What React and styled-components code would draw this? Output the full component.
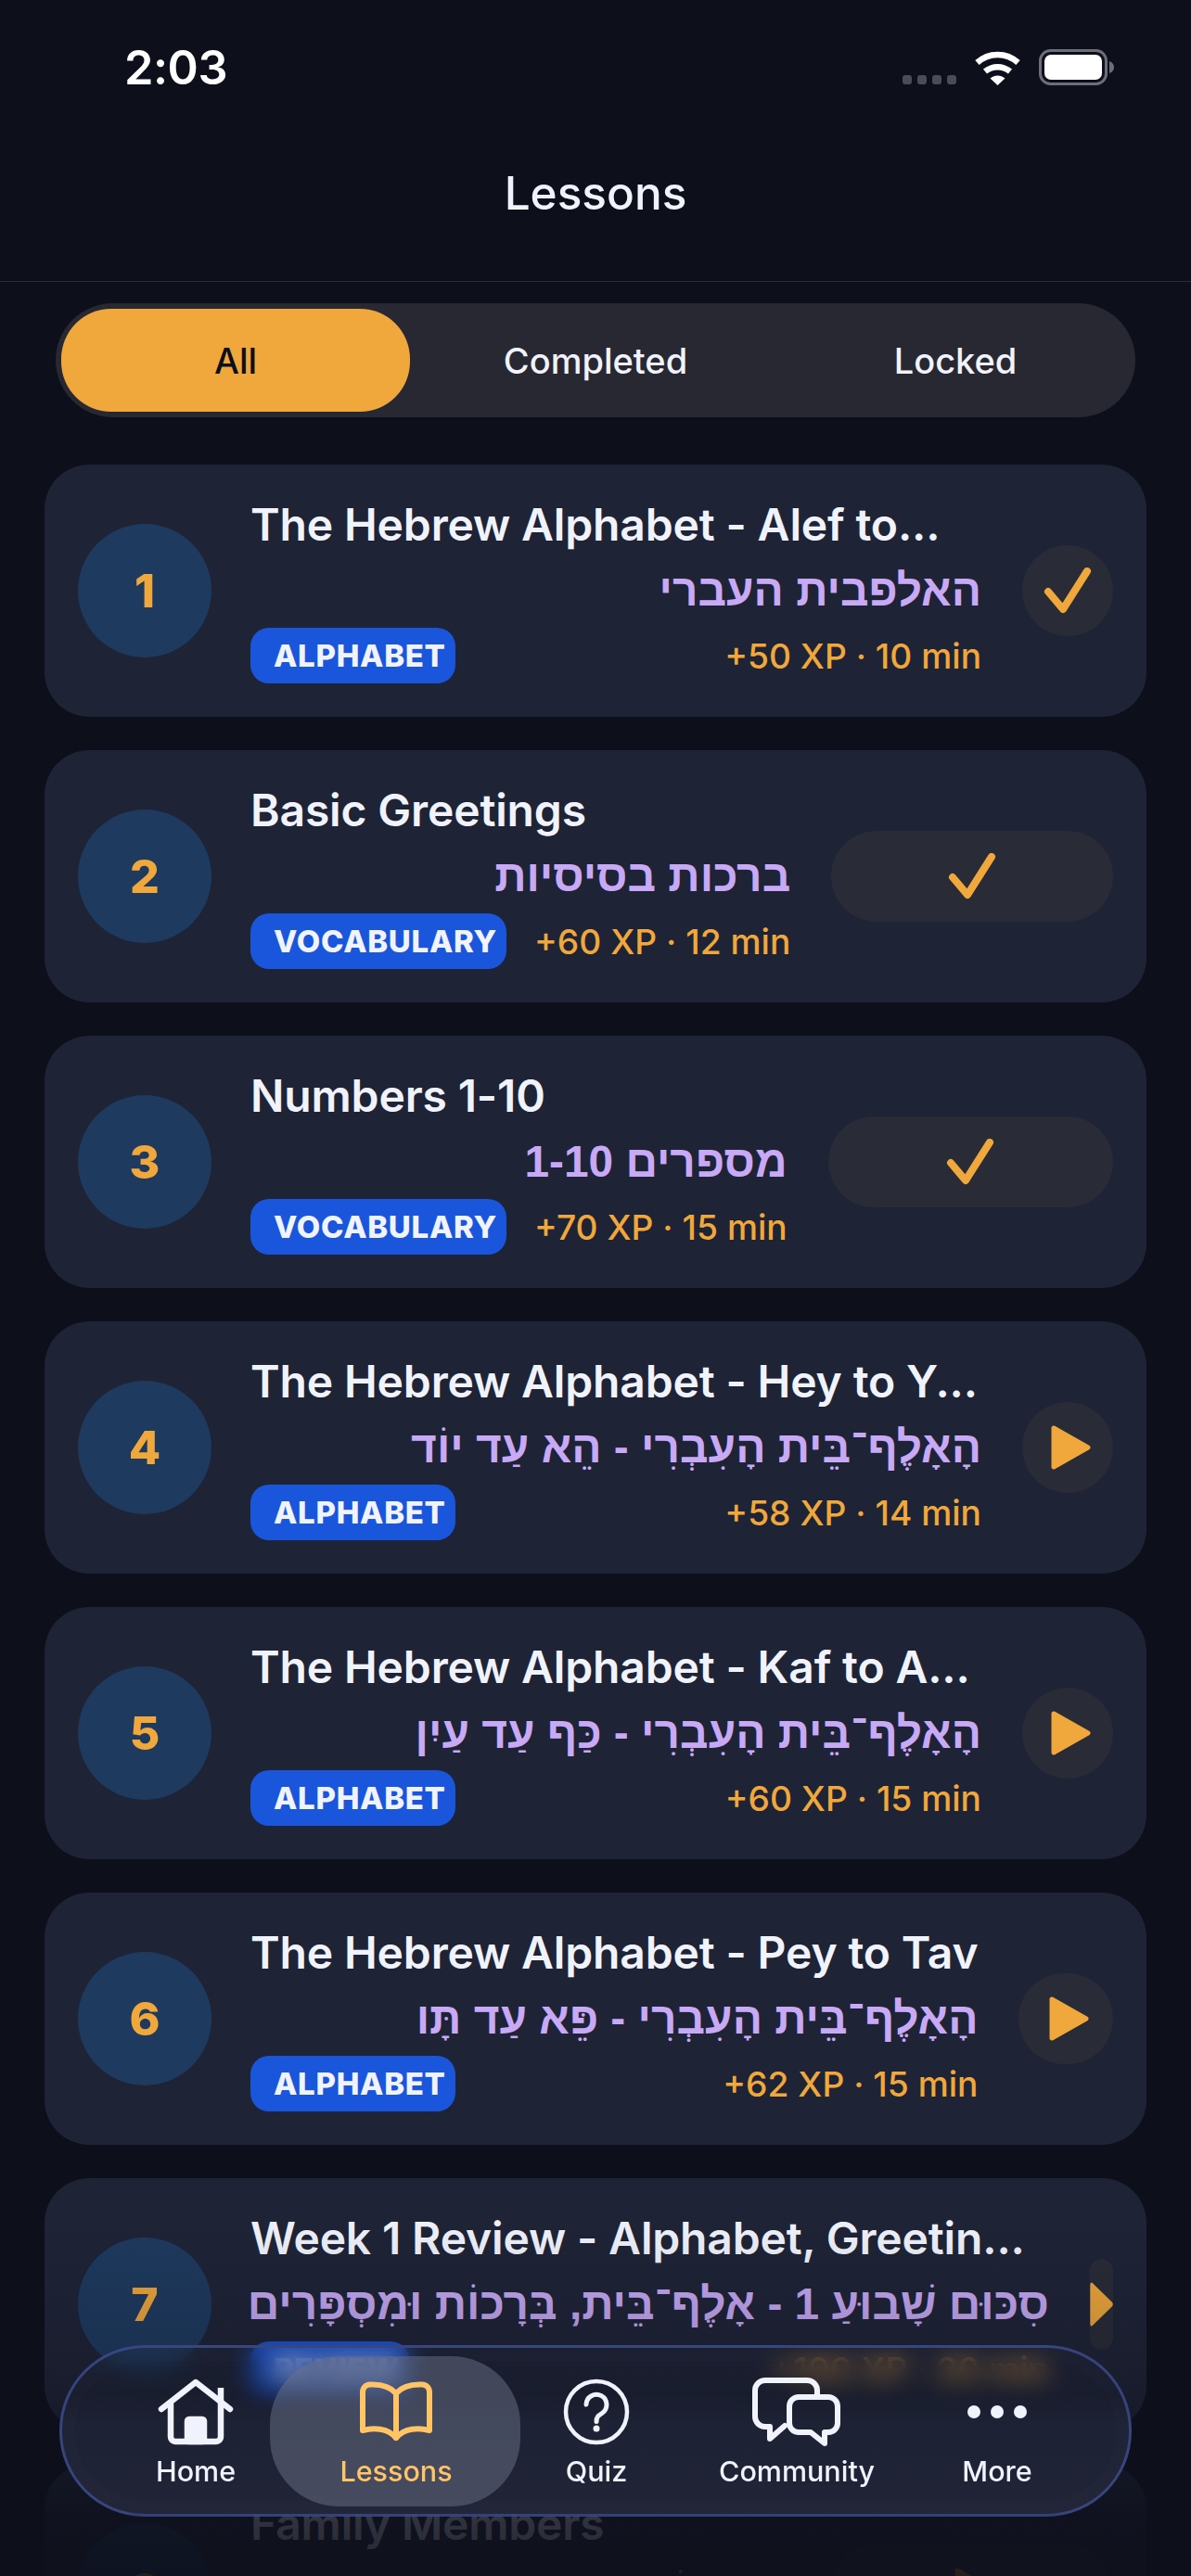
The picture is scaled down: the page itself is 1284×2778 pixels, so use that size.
import React from "react";
import styled, { createGlobalStyle } from "styled-components";

const Global = createGlobalStyle`
  html, body { margin: 0; padding: 0; background: #0d0f1a; }
  * { box-sizing: border-box; }
  body { font-family: Inter, "Liberation Sans", sans-serif; }
`;

const Screen = styled.div`
  position: relative;
  width: 1284px;
  height: 2778px;
  overflow: hidden;
  background: #0d0f1a;
  color: #f1f3fc;
`;

const StatusBar = styled.div`
  height: 144px;
  padding: 0 82px 0 134px;
  display: flex;
  align-items: center;
  justify-content: space-between;
`;
const Clock = styled.div`
  font-size: 50.5px;
  font-weight: 600;
  color: #fff;
  letter-spacing: -0.5px;
`;
const StatusIcons = styled.div`
  display: flex;
  align-items: flex-end;
  gap: 19px;
  height: 39px;
`;
const SignalDots = styled.div`
  display: flex;
  gap: 6px;
  margin-bottom: 1px;
`;
const SignalDot = styled.span`
  width: 10px;
  height: 10px;
  border-radius: 3px;
  background: #4a4c58;
`;

const TitleBar = styled.header`
  height: 160px;
  padding-bottom: 31px;
  display: flex;
  align-items: center;
  justify-content: center;
  border-bottom: 1px solid #2a2c39;
  font-size: 49.5px;
  font-weight: 500;
`;

const Tabs = styled.div`
  margin: 23px 60px 0;
  height: 123px;
  padding: 6px;
  border-radius: 62px;
  background: #282833;
  display: grid;
  grid-template-columns: repeat(3, 1fr);
  gap: 12px;
`;
const Tab = styled.div`
  border-radius: 54px;
  display: flex;
  align-items: center;
  justify-content: center;
  font-size: 38px;
  font-weight: 500;
  background: ${(p) => (p.$active ? "#f0a83c" : "transparent")};
  color: ${(p) => (p.$active ? "#0d0f1a" : "#f1f3fc")};
`;

const List = styled.div`
  margin-top: 51px;
  padding: 0 48px;
  display: flex;
  flex-direction: column;
  gap: 36px;
`;
const Card = styled.div`
  flex: none;
  height: 272px;
  padding: 0 36px;
  border-radius: 48px;
  background: #1e2336;
  display: flex;
  align-items: center;
  gap: 42px;
`;
const NumberBadge = styled.div`
  flex: none;
  width: 144px;
  height: 144px;
  border-radius: 50%;
  background: #1e3a5f;
  color: #f0a83c;
  font-size: 50px;
  font-weight: 800;
  display: flex;
  align-items: center;
  justify-content: center;
`;
const Body = styled.div`
  flex: ${(p) => (p.$full ? "0 0 788px" : "0 1 auto")};
  min-width: 0;
  display: flex;
  flex-direction: column;
`;
const LessonTitle = styled.div`
  font-size: 48px;
  line-height: 58px;
  font-weight: 600;
  letter-spacing: -0.15px;
  color: #f1f3fc;
  white-space: nowrap;
`;
const Hebrew = styled.div`
  margin-top: 13px;
  font-family: "Liberation Sans", Arial, sans-serif;
  font-size: 47.8px;
  line-height: 58px;
  font-weight: 700;
  color: #c7a9f5;
  white-space: nowrap;
  direction: rtl;
  text-align: right;
`;
const Meta = styled.div`
  margin-top: 11px;
  display: flex;
  align-items: center;
  justify-content: space-between;
  gap: 30px;
`;
const Tag = styled.div`
  height: 60px;
  padding: 0 10px 0 25px;
  border-radius: 20px;
  background: #1a56db;
  color: #f1f3fc;
  font-size: 33px;
  font-weight: 800;
  letter-spacing: 0.7px;
  display: flex;
  align-items: center;
  white-space: nowrap;
`;
const Reward = styled.div`
  font-size: 37.2px;
  font-weight: 500;
  color: #f0a83c;
  white-space: nowrap;
`;
const Action = styled.div`
  flex: 1 0 ${(p) => (p.$narrow ? "25px" : "98px")};
  margin-left: 2px;
  height: 98px;
  border-radius: 49px;
  background: #292b36;
  overflow: hidden;
  display: flex;
  align-items: center;
  justify-content: center;
`;
const PlayGlyph = styled.svg`
  flex: 0 1 43px;
  min-width: 0;
  height: 48px;
  margin-left: ${(p) => (p.$narrow ? "0" : "6px")};
`;

const Fade = styled.div`
  position: absolute;
  left: 0;
  right: 0;
  bottom: 0;
  height: 388px;
  pointer-events: none;
  background: linear-gradient(180deg, rgba(13, 15, 26, 0) 0%, rgba(13, 15, 26, 0.22) 40%, rgba(13, 15, 26, 0.85) 85%, rgba(13, 15, 26, 0.9) 100%);
`;

const Nav = styled.nav`
  position: absolute;
  left: 64px;
  right: 64px;
  bottom: 64px;
  height: 185px;
  padding: 29px 35px 0 37px;
  border-radius: 92px;
  border: 3px solid rgba(66, 82, 150, 0.75);
  background: linear-gradient(180deg, rgba(30, 35, 54, 0.04) 0%, rgba(30, 35, 54, 0.14) 28%, rgba(30, 35, 54, 0.96) 45%, rgba(32, 36, 54, 1) 100%);
  backdrop-filter: blur(13px);
  box-shadow: inset 0 0 0 14px rgba(255, 255, 255, 0.012);
  display: grid;
  grid-template-columns: repeat(5, 216px);
  justify-content: center;
`;
const NavItem = styled.div`
  position: relative;
  display: flex;
  flex-direction: column;
  align-items: center;
  color: ${(p) => (p.$active ? "#ffc466" : "#f1f3fc")};
  &::before {
    content: ${(p) => (p.$active ? '""' : "none")};
    position: absolute;
    left: -28px;
    right: -26px;
    top: -20px;
    height: 162px;
    border-radius: 74px;
    background: rgba(108, 113, 135, 0.5);
  }
`;
const NavIcon = styled.div`
  position: relative;
  height: 80px;
  display: flex;
  align-items: center;
  justify-content: center;
`;
const NavLabel = styled.div`
  position: relative;
  margin-top: 4px;
  font-size: 30.5px;
  line-height: 40px;
  font-weight: 500;
`;
const MoreDots = styled.div`
  display: flex;
  gap: 11px;
`;
const MoreDot = styled.span`
  width: 14px;
  height: 14px;
  border-radius: 50%;
  background: currentColor;
`;

const Check = () => (
  <svg width="52" height="50" viewBox="0 0 52 50" fill="none">
    <path d="M5 26L21 45L47 4" stroke="#f0a83c" strokeWidth="8" strokeLinecap="round" strokeLinejoin="round" />
  </svg>
);
const Play = ({ narrow }) => (
  <PlayGlyph $narrow={narrow} viewBox="0 0 43 48" preserveAspectRatio="none">
    <path d="M3 3L40 24L3 45Z" fill="#f0a83c" stroke="#f0a83c" strokeWidth="5" strokeLinejoin="round" />
  </PlayGlyph>
);

const Wifi = () => (
  <svg width="51" height="38" viewBox="0 0 51 38" fill="none">
    <path d="M3.5 13.5C16 2 35 2 47.5 13.5" stroke="#fff" strokeWidth="6.5" />
    <path d="M12 23C20 16.5 31 16.5 39 23" stroke="#fff" strokeWidth="6.5" />
    <path d="M17.5 30.5C22.5 26.5 28.5 26.5 33.5 30.5L25.5 38Z" fill="#fff" />
  </svg>
);
const Battery = () => (
  <svg width="82" height="39" viewBox="0 0 82 39" fill="none">
    <rect x="1.5" y="1.5" width="71" height="36" rx="11" stroke="#6d6e78" strokeWidth="3" />
    <rect x="6" y="6" width="62" height="27" rx="7" fill="#fff" />
    <path d="M76 13C79 14 81 16.5 81 19.5C81 22.5 79 25 76 26Z" fill="#6d6e78" />
  </svg>
);

const HomeIcon = () => (
  <svg width="82" height="72" viewBox="0 0 82 72" fill="none" stroke="currentColor" strokeWidth="6.5" strokeLinecap="round" strokeLinejoin="round">
    <path d="M4 33L41 4L78 33" />
    <path d="M14 27V63a5 5 0 0 0 5 5H63a5 5 0 0 0 5-5V10" strokeLinecap="butt" />
    <rect x="32" y="44" width="18" height="24" rx="2" fill="currentColor" />
  </svg>
);
const BookIcon = () => (
  <svg width="78" height="66" viewBox="0 0 78 66" fill="none" stroke="currentColor" strokeWidth="6" strokeLinecap="round" strokeLinejoin="round">
    <path d="M39 13C33 6 22 3 11 3.500C6 3.800 3 7 3 12V53C14 50 30 50 39 61C48 50 64 50 75 53V12C75 7 72 3.800 67 3.500C56 3 45 6 39 13Z" />
    <path d="M39 13V61" />
  </svg>
);
const QuizIcon = () => (
  <svg width="72" height="72" viewBox="0 0 72 72" fill="none" stroke="currentColor" strokeWidth="4.500" strokeLinecap="round" strokeLinejoin="round">
    <circle cx="36" cy="36" r="33" />
    <path d="M25 28a11 11 0 1 1 17 9.500c-4 2.500-6 4-6 9" strokeWidth="5" />
    <circle cx="36" cy="54" r="3.500" fill="currentColor" stroke="none" />
  </svg>
);
const CommunityIcon = () => (
  <svg width="102" height="80" viewBox="0 0 102 80" fill="none" stroke="currentColor" strokeWidth="6" strokeLinecap="round" strokeLinejoin="round">
    <path d="M73 21V17a11 11 0 0 0-11-11H17a11 11 0 0 0-11 11V45a11 11 0 0 0 11 11H22V69L38 55" />
    <path d="M53 24H85a10 10 0 0 1 10 10V52a10 10 0 0 1-10 10H81V74L66 62H53a10 10 0 0 1-10-10V34a10 10 0 0 1 10-10Z" />
  </svg>
);

const lessons = [
  { n: 1, title: "The Hebrew Alphabet - Alef to...", full: true, he: "האלפבית העברי", tag: "ALPHABET", xp: "+50 XP · 10 min", done: true },
  { n: 2, title: "Basic Greetings", he: "ברכות בסיסיות", tag: "VOCABULARY", xp: "+60 XP · 12 min", done: true },
  { n: 3, title: "Numbers 1-10", he: "מספרים 1-10", tag: "VOCABULARY", xp: "+70 XP · 15 min", done: true },
  { n: 4, title: "The Hebrew Alphabet - Hey to Y...", full: true, he: "הָאָלֶף־בֵּית הָעִבְרִי - הֵא עַד יוֹד", tag: "ALPHABET", xp: "+58 XP · 14 min" },
  { n: 5, title: "The Hebrew Alphabet - Kaf to A...", full: true, he: "הָאָלֶף־בֵּית הָעִבְרִי - כַּף עַד עַיִן", tag: "ALPHABET", xp: "+60 XP · 15 min" },
  { n: 6, title: "The Hebrew Alphabet - Pey to Tav", he: "הָאָלֶף־בֵּית הָעִבְרִי - פֵּא עַד תָּו", tag: "ALPHABET", xp: "+62 XP · 15 min" },
  { n: 7, title: "Week 1 Review - Alphabet, Greetin...", he: "סִכּוּם שָׁבוּעַ 1 - אָלֶף־בֵּית, בְּרָכוֹת וּמִסְפָּרִים", tag: "REVIEW", xp: "+100 XP · 20 min", narrow: true },
  { n: 8, title: "Family Members", he: "בְּנֵי מִשְׁפָּחָה", tag: "VOCABULARY", xp: "+65 XP · 15 min" },
];

const navItems = [
  { label: "Home", icon: <HomeIcon /> },
  { label: "Lessons", icon: <BookIcon />, active: true },
  { label: "Quiz", icon: <QuizIcon /> },
  { label: "Community", icon: <CommunityIcon /> },
  { label: "More", icon: <MoreDots><MoreDot /><MoreDot /><MoreDot /></MoreDots> },
];

export default function App() {
  return (
    <Screen>
      <Global />
      <StatusBar>
        <Clock>2:03</Clock>
        <StatusIcons>
          <SignalDots>
            <SignalDot /><SignalDot /><SignalDot /><SignalDot />
          </SignalDots>
          <Wifi />
          <Battery />
        </StatusIcons>
      </StatusBar>
      <TitleBar>Lessons</TitleBar>
      <Tabs>
        <Tab $active>All</Tab>
        <Tab>Completed</Tab>
        <Tab>Locked</Tab>
      </Tabs>
      <List>
        {lessons.map((l) => (
          <Card key={l.n}>
            <NumberBadge>{l.n}</NumberBadge>
            <Body $full={l.full}>
              <LessonTitle>{l.title}</LessonTitle>
              <Hebrew>{l.he}</Hebrew>
              <Meta>
                <Tag>{l.tag}</Tag>
                <Reward>{l.xp}</Reward>
              </Meta>
            </Body>
            <Action $narrow={l.narrow}>{l.done ? <Check /> : <Play narrow={l.narrow} />}</Action>
          </Card>
        ))}
      </List>
      <Fade />
      <Nav>
        {navItems.map((item) => (
          <NavItem key={item.label} $active={item.active}>
            <NavIcon>{item.icon}</NavIcon>
            <NavLabel>{item.label}</NavLabel>
          </NavItem>
        ))}
      </Nav>
    </Screen>
  );
}
